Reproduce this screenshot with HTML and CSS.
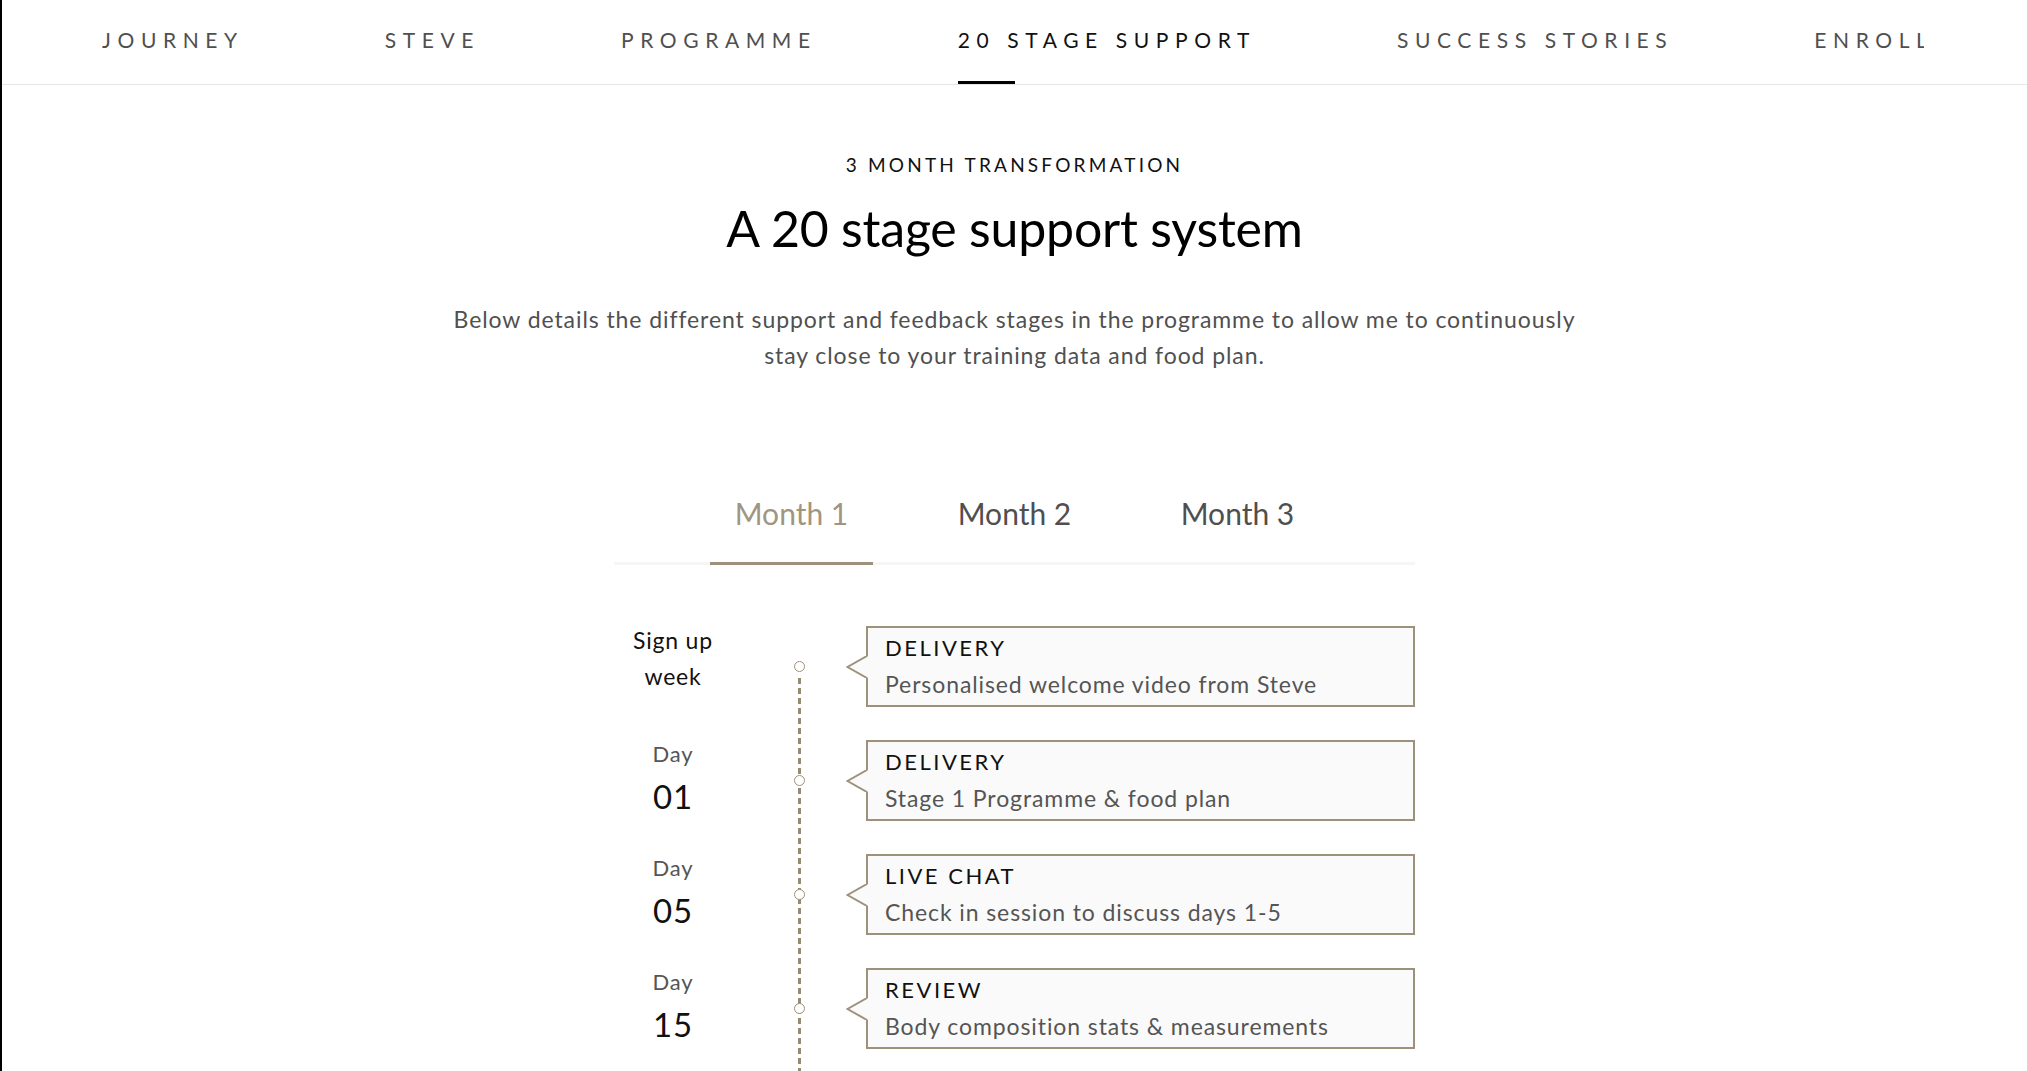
FILE: index.html
```html
<!DOCTYPE html>
<html lang="en">
<head>
<meta charset="utf-8">
<title>20 Stage Support</title>
<link rel="stylesheet" href="styles.css">
</head>
<body>
<div class="page">
  <nav class="topnav">
    <ul class="topnav-list">
      <li class="topnav-item"><a class="topnav-link" href="#">JOURNEY</a></li>
      <li class="topnav-item"><a class="topnav-link" href="#">STEVE</a></li>
      <li class="topnav-item"><a class="topnav-link" href="#">PROGRAMME</a></li>
      <li class="topnav-item is-active"><a class="topnav-link" href="#">20 STAGE SUPPORT</a></li>
      <li class="topnav-item"><a class="topnav-link" href="#">SUCCESS STORIES</a></li>
      <li class="topnav-item"><a class="topnav-link" href="#">ENROLL</a></li>
    </ul>
  </nav>

  <main class="section">
    <p class="eyebrow">3 MONTH TRANSFORMATION</p>
    <h1 class="title">A 20 stage support system</h1>
    <p class="intro">Below details the different support and feedback stages in the programme to allow me to continuously stay close to your training data and food plan.</p>

    <div class="tabs">
      <div class="tab is-active">Month 1</div>
      <div class="tab">Month 2</div>
      <div class="tab">Month 3</div>
    </div>

    <ol class="timeline">
      <li class="stage">
        <div class="when"><span class="when-text">Sign up<br>week</span></div>
        <div class="marker"><span class="dot"></span></div>
        <div class="card">
          <svg class="card-arrow" viewBox="0 0 22 22" width="22" height="22"><polygon points="22,0 1,11 22,22" fill="#fafafa"/><polyline points="21,0 1.5,11 21,22" fill="none" stroke="#9d917b" stroke-width="2"/></svg>
          <h3 class="card-title">DELIVERY</h3>
          <p class="card-text">Personalised welcome video from Steve</p>
        </div>
      </li>
      <li class="stage">
        <div class="when"><span class="when-label">Day</span><span class="when-num">01</span></div>
        <div class="marker"><span class="dot"></span></div>
        <div class="card">
          <svg class="card-arrow" viewBox="0 0 22 22" width="22" height="22"><polygon points="22,0 1,11 22,22" fill="#fafafa"/><polyline points="21,0 1.5,11 21,22" fill="none" stroke="#9d917b" stroke-width="2"/></svg>
          <h3 class="card-title">DELIVERY</h3>
          <p class="card-text">Stage 1 Programme &amp; food plan</p>
        </div>
      </li>
      <li class="stage">
        <div class="when"><span class="when-label">Day</span><span class="when-num">05</span></div>
        <div class="marker"><span class="dot"></span></div>
        <div class="card">
          <svg class="card-arrow" viewBox="0 0 22 22" width="22" height="22"><polygon points="22,0 1,11 22,22" fill="#fafafa"/><polyline points="21,0 1.5,11 21,22" fill="none" stroke="#9d917b" stroke-width="2"/></svg>
          <h3 class="card-title">LIVE CHAT</h3>
          <p class="card-text">Check in session to discuss days 1-5</p>
        </div>
      </li>
      <li class="stage">
        <div class="when"><span class="when-label">Day</span><span class="when-num">15</span></div>
        <div class="marker"><span class="dot"></span></div>
        <div class="card">
          <svg class="card-arrow" viewBox="0 0 22 22" width="22" height="22"><polygon points="22,0 1,11 22,22" fill="#fafafa"/><polyline points="21,0 1.5,11 21,22" fill="none" stroke="#9d917b" stroke-width="2"/></svg>
          <h3 class="card-title">REVIEW</h3>
          <p class="card-text">Body composition stats &amp; measurements</p>
        </div>
      </li>
    </ol>
  </main>
</div>
</body>
</html>
```

FILE: styles.css
```css
* { box-sizing: border-box; }

html, body {
  margin: 0;
  padding: 0;
  background: #fff;
}

body {
  font-family: Lato, "Noto Sans", sans-serif;
  color: #111;
}

.page {
  border-left: 2px solid #000;
  min-height: 100vh;
  overflow: hidden;
}

/* ---------- top navigation ---------- */
.topnav {
  height: 85px;
  border-bottom: 1px solid #e6e6e6;
  padding: 0 103px 0 100px;
}

.topnav-list {
  list-style: none;
  margin: 0;
  padding: 0;
  display: flex;
  gap: 141px;
  height: 84px;
  overflow: hidden;
  white-space: nowrap;
}

.topnav-item {
  position: relative;
  flex: none;
  height: 84px;
  display: flex;
  align-items: center;
  padding-bottom: 6px;
}

.topnav-link {
  font-size: 21px;
  letter-spacing: 6.6px;
  color: #4f4f4f;
  text-decoration: none;
}

.topnav-item.is-active .topnav-link { color: #111; }

.topnav-item.is-active::after {
  content: "";
  position: absolute;
  left: 0;
  bottom: 0;
  width: 57px;
  height: 3px;
  background: #000;
}

/* ---------- section ---------- */
.section {
  display: flex;
  flex-direction: column;
  align-items: center;
  padding-top: 66px;
}

.eyebrow {
  margin: 0;
  font-size: 19px;
  line-height: 28px;
  letter-spacing: 3.2px;
  color: #111;
}

.title {
  margin: 21px 0 0;
  font-size: 50px;
  line-height: 56px;
  font-weight: 400;
  letter-spacing: -0.2px;
  color: #000;
}

.intro {
  margin: 45px 0 0;
  max-width: 1160px;
  font-size: 23px;
  line-height: 36px;
  letter-spacing: 0.92px;
  color: #505050;
  text-align: center;
}

/* ---------- tabs ---------- */
.tabs {
  margin-top: 120px;
  width: 801px;
  display: flex;
  justify-content: center;
  gap: 60px;
  border-bottom: 3px solid #f6f6f6;
}

.tab {
  width: 163px;
  text-align: center;
  font-size: 30px;
  line-height: 40px;
  padding-bottom: 29px;
  margin-bottom: -3px;
  border-bottom: 3px solid transparent;
  color: #4f4f4f;
}

.tab.is-active {
  color: #a09580;
  border-bottom-color: #9d917b;
}

/* ---------- timeline ---------- */
.timeline {
  list-style: none;
  margin: 57px 0 0;
  padding: 0;
  width: 801px;
  position: relative;
}

.timeline::before {
  content: "";
  position: absolute;
  left: 183.5px;
  top: 56px;
  bottom: 0;
  width: 3px;
  background: repeating-linear-gradient(to bottom, #978a73 0 6px, transparent 6px 10px);
}

.stage {
  display: grid;
  grid-template-columns: 118px 134px 1fr;
  height: 114px;
}

.when {
  text-align: center;
  font-size: 23px;
  line-height: 36px;
  letter-spacing: 0.8px;
  color: #111;
}

.when-label {
  display: block;
  font-size: 22px;
  line-height: 36px;
  color: #555;
}

.when-num {
  display: block;
  font-size: 33px;
  line-height: 48px;
  color: #111;
}

.marker {
  position: relative;
  z-index: 1;
  display: flex;
  justify-content: center;
  align-items: flex-start;
  padding-top: 39px;
}

.dot {
  width: 11px;
  height: 11px;
  border: 1px solid #9d917b;
  border-radius: 50%;
  background: #fff;
}

.card {
  position: relative;
  margin-top: 4px;
  height: 81px;
  border: 2px solid #9d917b;
  background: #fafafa;
  padding: 2px 17px 3px;
}

.card-arrow {
  position: absolute;
  left: -22px;
  top: 50%;
  margin-top: -11px;
  display: block;
}

.card-title {
  margin: 0;
  font-size: 22px;
  line-height: 36px;
  letter-spacing: 2.5px;
  font-weight: 400;
  color: #111;
}

.card-text {
  margin: 0;
  font-size: 23px;
  line-height: 36px;
  letter-spacing: 0.9px;
  color: #555;
}
```
